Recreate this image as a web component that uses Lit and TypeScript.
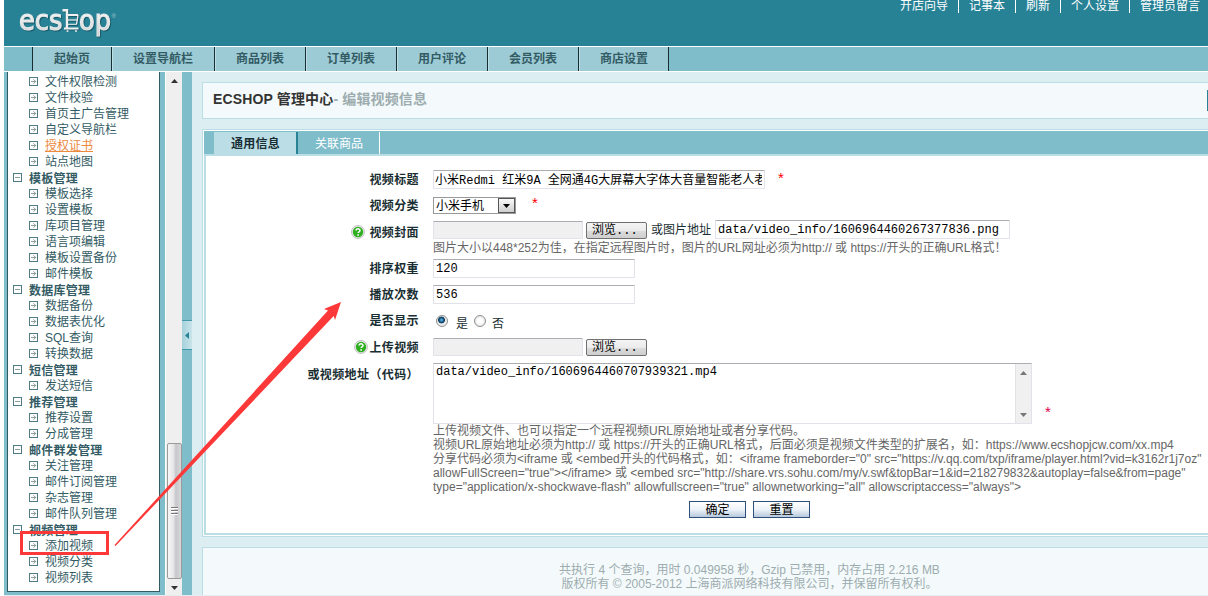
import { LitElement, css, html, svg, nothing } from "lit";

interface MenuGroup {
  title?: string;
  items: string[];
  active?: string;
}

const TOP_LINKS = ["开店向导", "记事本", "刷新", "个人设置", "管理员留言"];

const NAV = ["起始页", "设置导航栏", "商品列表", "订单列表", "用户评论", "会员列表", "商店设置"];

const MENU: MenuGroup[] = [
  {
    items: ["文件权限检测", "文件校验", "首页主广告管理", "自定义导航栏", "授权证书", "站点地图"],
    active: "授权证书"
  },
  {
    title: "模板管理",
    items: ["模板选择", "设置模板", "库项目管理", "语言项编辑", "模板设置备份", "邮件模板"]
  },
  { title: "数据库管理", items: ["数据备份", "数据表优化", "SQL查询", "转换数据"] },
  { title: "短信管理", items: ["发送短信"] },
  { title: "推荐管理", items: ["推荐设置", "分成管理"] },
  { title: "邮件群发管理", items: ["关注管理", "邮件订阅管理", "杂志管理", "邮件队列管理"] },
  { title: "视频管理", items: ["添加视频", "视频分类", "视频列表"] }
];

const UPLOAD_NOTES = [
  "上传视频文件、也可以指定一个远程视频URL原始地址或者分享代码。",
  "视频URL原始地址必须为http:// 或 https://开头的正确URL格式，后面必须是视频文件类型的扩展名，如：https://www.ecshopjcw.com/xx.mp4",
  '分享代码必须为<iframe 或 <embed开头的代码格式，如：<iframe frameborder="0" src="https://v.qq.com/txp/iframe/player.html?vid=k3162r1j7oz"',
  'allowFullScreen="true"></iframe> 或 <embed src="http://share.vrs.sohu.com/my/v.swf&topBar=1&id=218279832&autoplay=false&from=page"',
  'type="application/x-shockwave-flash" allowfullscreen="true" allownetworking="all" allowscriptaccess="always">'
];

const box = svg`<rect x="0.5" y="0.5" width="8" height="8" fill="#fff" stroke="#4f7b84" />`;

const minusIcon = html`<svg class="ico" width="9" height="9">${box}<path d="M2 4.5h5" stroke="#8a9a9e" /></svg>`;

const itemIcon = html`
  <svg class="ico" width="9" height="9">
    ${box}
    <path d="M2 4.5h5M4.5 2.3l2.2 2.2l-2.2 2.2" fill="none" stroke="#8a9a9e" />
  </svg>
`;

const helpIcon = html`
  <svg class="help" width="14" height="14">
    <circle cx="7" cy="7" r="6.4" fill="#f1f1f1" stroke="#b4b4b4" stroke-width="0.9" />
    <circle cx="7" cy="7" r="5.2" fill="#2fae20" />
    <path d="M5.1 5.6c0-2.3 3.9-2.3 3.9-.1c0 1.4-1.9 1.2-1.9 2.6" fill="none" stroke="#fff" stroke-width="1.5" />
    <rect x="6.3" y="9.2" width="1.6" height="1.5" fill="#fff" />
  </svg>
`;

const upArrow = html`<svg width="7" height="4"><path d="M0 4l3.5-4l3.5 4z" fill="currentColor" /></svg>`;
const downArrow = html`<svg width="7" height="4"><path d="M0 0h7l-3.5 4z" fill="currentColor" /></svg>`;

class AppRoot extends LitElement {
  static get styles() {
    return css`
      :host {
        display: block;
        position: relative;
        width: 1208px;
        height: 596px;
        overflow: hidden;
        background: #fff;
        color: #192e32;
        font: 12px/16px "Liberation Sans", "Noto Sans CJK SC", sans-serif;
      }
      * {
        box-sizing: border-box;
      }
      svg {
        display: block;
        flex: none;
      }
      .page {
        display: flex;
        flex-direction: column;
        height: 596px;
        padding-left: 4px;
      }
      .header {
        display: flex;
        justify-content: space-between;
        height: 46px;
        flex: none;
        background: #278296;
      }
      .links {
        display: flex;
        height: 13px;
        color: #fff;
        line-height: 13px;
      }
      .links a {
        padding: 0 10px;
        border-left: 1px solid #fff;
      }
      .links a:first-child {
        border-left: 0;
      }
      .links a:last-child {
        padding-right: 8px;
      }
      .nav {
        display: flex;
        height: 26px;
        flex: none;
        padding-left: 28px;
        background: #80bdcb;
        border-top: 1px solid #fff;
        border-bottom: 1px solid #fff;
        color: #335b64;
        font-weight: bold;
        line-height: 25px;
      }
      .nav a {
        height: 24px;
        padding: 0 21px 0 20px;
        background: #9ccbd6;
        border-left: 1px solid #bbdde5;
        border-right: 1px solid #192e32;
      }
      .nav a:first-child {
        padding-left: 21px;
        border-left-color: #192e32;
      }
      .nav a:last-child {
        padding-right: 20px;
      }
      .main {
        display: flex;
        height: 523px;
        flex: none;
      }
      .side {
        width: 161px;
        padding: 0 5px 3px 3px;
        background: #80bdcb;
      }
      .menu {
        height: 520px;
        padding: 1px 0 0 5px;
        background: #fff;
        border: 1px solid #335b64;
        border-top: 0;
        color: #335b64;
      }
      .row {
        display: flex;
        align-items: center;
        height: 16px;
        line-height: 16px;
        white-space: nowrap;
      }
      .row span {
        padding-top: 2px;
      }
      .row.group {
        gap: 7px;
        font-weight: bold;
        letter-spacing: 0.25px;
      }
      .row.group span {
        padding-top: 3px;
      }
      .row.item {
        gap: 7px;
        padding-left: 16px;
      }
      .current {
        color: #eb8a3d;
        text-decoration: underline;
      }
      .track {
        display: flex;
        flex-direction: column;
        align-items: center;
        justify-content: space-between;
        width: 17px;
        padding: 7px 0 5px;
        background: #efefef;
        border-left: 1px solid #fff;
        color: #333;
      }
      .thumb {
        display: flex;
        flex-direction: column;
        align-items: center;
        justify-content: center;
        gap: 1px;
        width: 15px;
        height: 136px;
        margin-top: 353px;
        margin-bottom: 1px;
        border: 1px solid #9a9a9a;
        border-radius: 2px;
        background: linear-gradient(90deg, #f7f7f7, #e4e4e6 45%, #c6c7cb 60%, #d8d8da);
      }
      .thumb i {
        width: 7px;
        height: 2px;
        background: #777;
        border-bottom: 1px solid #fff;
      }
      .drag {
        display: flex;
        align-items: center;
        width: 10px;
        padding-top: 3px;
        background: #80bdcb;
      }
      .toggle {
        display: flex;
        align-items: center;
        justify-content: center;
        width: 10px;
        height: 30px;
        background: linear-gradient(90deg, #a5d1db, #c9e4ea);
        border-top: 1px solid #4199ab;
        border-bottom: 1px solid #4199ab;
      }
      .content {
        display: flex;
        flex-direction: column;
        flex: 1;
        gap: 10px;
        padding: 10px 0 0 10px;
        background: #ddeef2;
      }
      .title {
        display: flex;
        align-items: center;
        justify-content: space-between;
        height: 37px;
        padding-left: 10px;
        background: #f4fafb;
        border: 1px solid #bbdde5;
        border-right: 0;
        font-size: 14px;
        font-weight: bold;
        letter-spacing: 0.15px;
        color: #333;
      }
      .title div {
        padding-bottom: 3px;
      }
      .title span {
        color: #9cacaf;
      }
      .title i {
        width: 1px;
        height: 21px;
        background: #278296;
      }
      .panel {
        height: 408px;
        padding: 1px 0 1px 1px;
        background: #fff;
        border: 1px solid #bbdde5;
        border-right: 0;
      }
      .tabs {
        display: flex;
        height: 23px;
        padding: 1px 0 0 10px;
        background: #80bdcb;
        line-height: 24px;
      }
      .tabs a {
        height: 22px;
        padding: 0 16px 0 17px;
        border-right: 1px solid #fff;
        color: #fff;
      }
      .tabs a.on {
        background: #bbdde5;
        border-right: 2px solid #278296;
        color: #192e32;
        font-weight: bold;
        letter-spacing: 0.25px;
      }
      .form {
        height: 381px;
        padding-top: 10px;
        border: 2px solid #bbdde5;
        border-right: 0;
      }
      .field {
        display: flex;
        align-items: flex-start;
        height: 26px;
        padding-top: 4px;
      }
      .field.cover {
        height: 37px;
        padding-top: 2px;
      }
      .field.show {
        height: 27px;
      }
      .field.code {
        height: auto;
        padding-top: 3px;
      }
      .label {
        display: flex;
        justify-content: flex-end;
        align-items: center;
        gap: 4px;
        width: 213px;
        height: 18px;
        flex: none;
        margin-right: 14px;
        padding-top: 2px;
        font-weight: bold;
        letter-spacing: 0.4px;
      }
      .help {
        margin-bottom: 2px;
      }
      .cover .label {
        margin-top: 3px;
      }
      .upload .label {
        gap: 1px;
      }
      .code .label {
        margin-top: 2px;
      }
      .line {
        display: flex;
        align-items: flex-start;
        white-space: nowrap;
      }
      .input,
      .file,
      .code-box {
        height: 19px;
        margin: 0;
        padding: 0 2px;
        background: #fff;
        border: 1px solid #e2e3ea;
        border-top-color: #abadb3;
        border-radius: 1px;
        outline: 0;
        color: #000;
        font: 12px/16px "Liberation Mono", "Noto Sans CJK SC", monospace;
      }
      .w-title {
        width: 332px;
        padding: 0 2px 2px 1px;
      }
      .w-url {
        width: 295px;
        margin-left: 4px;
      }
      .w-num {
        width: 202px;
      }
      .file {
        width: 150px;
        height: 18px;
        background: #f0f0f0;
      }
      .cover .file {
        margin-top: 1px;
      }
      .browse {
        width: 61px;
        height: 17px;
        margin: 1px 0 0 3px;
        padding-left: 5px;
        background: linear-gradient(#f4f4f4, #ebebeb 50%, #dcdcdc 51%, #cfcfcf);
        border: 1px solid #707070;
        border-radius: 2px;
        color: #000;
        font: 12px/17px "Liberation Mono", "Noto Sans CJK SC", monospace;
      }
      .cover .browse {
        margin-top: 2px;
      }
      .or {
        margin-left: 4px;
        line-height: 20px;
      }
      .select {
        display: flex;
        width: 83px;
        height: 17px;
        margin-top: 1px;
        padding: 0 0 0 2px;
        justify-content: space-between;
        align-items: center;
        border: 1px solid #9a9a9a;
        color: #000;
        line-height: 17px;
      }
      .select span {
        padding-top: 2px;
      }
      .select i {
        display: flex;
        align-items: center;
        justify-content: center;
        width: 17px;
        height: 15px;
        border: 1px solid #555;
        background: linear-gradient(#f8f8f8, #cfcfcf);
      }
      .star {
        margin-left: 13px;
        color: #f00;
        font-size: 15px;
        line-height: 16px;
      }
      .select + .star {
        margin-left: 16px;
        line-height: 14px;
      }
      .code-line .star {
        align-self: flex-end;
        color: #e0004a;
        margin-bottom: 4px;
      }
      .note {
        color: #666;
        line-height: 14px;
        white-space: nowrap;
      }
      .cover .note {
        padding-top: 1px;
      }
      .radio {
        width: 12px;
        height: 12px;
        margin: 4px 8px 0 3px;
        border: 1px solid #8e8f8f;
        border-radius: 50%;
        background: radial-gradient(#fff 30%, #d5d8da);
      }
      .radio.on {
        background: radial-gradient(circle at 45% 40%, #6cc2ee 0, #1b5c8c 25%, #133a5a 38%, #e6e9ea 46%, #f4f4f4);
      }
      .radio:not(.on) {
        margin-right: 6px;
      }
      .opt {
        width: 15px;
        line-height: 26px;
      }
      .code-box {
        display: flex;
        justify-content: space-between;
        width: 599px;
        height: 61px;
        padding-right: 0;
      }
      .bar {
        display: flex;
        flex-direction: column;
        justify-content: space-between;
        align-items: center;
        width: 16px;
        padding: 7px 0 6px;
        background: #f0f0f0;
        border-left: 1px solid #e3e3e3;
        color: #777;
      }
      .buttons {
        display: flex;
        gap: 7px;
        padding: 7px 0 0 483px;
      }
      .btn {
        width: 57px;
        height: 17px;
        background: linear-gradient(#fff, #edf3f8 50%, #b8c9dc);
        border: 1px solid #2c4f7c;
        color: #000;
        line-height: 17px;
        text-align: center;
      }
      .footer {
        flex: 1;
        padding: 15px 0 0 88px;
        background: #f4fafb;
        border: 1px solid #bbdde5;
        border-width: 1px 0 0 1px;
        color: #9cacaf;
        line-height: 14px;
        text-align: center;
        white-space: nowrap;
      }
      .bottom {
        height: 1px;
        background: #e8ecee;
      }
      .marks {
        position: absolute;
        left: 0;
        top: 0;
        pointer-events: none;
      }
      .wordmark {
        filter: drop-shadow(1px 1px 0.5px #1a5a69);
      }
    `;
  }

  private _renderLogo() {
    return html`
      <svg width="120" height="44">
        <defs>
          <linearGradient id="metal" x1="0" y1="0" x2="0" y2="1">
            <stop offset="0.2" stop-color="#fff" />
            <stop offset="1" stop-color="#c3c8ca" />
          </linearGradient>
        </defs>
        <g
          class="wordmark"
          fill="url(#metal)"
          font-family="DejaVu Sans"
          font-size="28"
          stroke="#e4e6e7"
          stroke-width="1.2"
        >
          <text x="15" y="30" textLength="43.5" lengthAdjust="spacingAndGlyphs">ecs</text>
          <text x="75" y="30" textLength="32" lengthAdjust="spacingAndGlyphs">op</text>
        </g>
        <g class="wordmark" fill="none" stroke="#f0f0f0">
          <path d="M58.5 10.2h4.5v18.3" stroke-width="2.4" />
          <path d="M63 15h11M60 28.5h14.5" stroke-width="2.2" />
          <path d="M64 20h9.5M64 24.3h8.5" stroke="#c9dadd" stroke-width="1.3" />
          <path d="M74 15l-1.5 9.5" stroke-width="1.3" />
        </g>
        <circle cx="63.5" cy="31" r="1.1" fill="#ddd" />
        <circle cx="72" cy="31" r="1.1" fill="#ddd" />
        <text x="107.5" y="17.5" font-size="6" fill="#a8cdd5">®</text>
      </svg>
    `;
  }

  private _renderGroup(group: MenuGroup) {
    return html`
      ${group.title ? html`<div class="row group">${minusIcon}<span>${group.title}</span></div>` : nothing}
      ${group.items.map(
        (item) => html`
          <div class="row item">
            ${itemIcon}<span class=${item === group.active ? "current" : ""}>${item}</span>
          </div>
        `
      )}
    `;
  }

  private _renderForm() {
    return html`
      <div class="form">
        <div class="field">
          <div class="label">视频标题</div>
          <input class="input w-title" value="小米Redmi 红米9A 全网通4G大屏幕大字体大音量智能老人老年手机" />
          <span class="star">*</span>
        </div>
        <div class="field">
          <div class="label">视频分类</div>
          <div class="select"><span>小米手机</span><i>${downArrow}</i></div>
          <span class="star">*</span>
        </div>
        <div class="field cover">
          <div class="label">${helpIcon}<span>视频封面</span></div>
          <div>
            <div class="line">
              <div class="file"></div>
              <div class="browse">浏览...</div>
              <span class="or">或图片地址</span>
              <input class="input w-url" value="data/video_info/1606964460267377836.png" />
            </div>
            <div class="note">
              图片大小以448*252为佳，在指定远程图片时，图片的URL网址必须为http:// 或 https://开头的正确URL格式！
            </div>
          </div>
        </div>
        <div class="field">
          <div class="label">排序权重</div>
          <input class="input w-num" value="120" />
        </div>
        <div class="field">
          <div class="label">播放次数</div>
          <input class="input w-num" value="536" />
        </div>
        <div class="field show">
          <div class="label">是否显示</div>
          <div class="line">
            <span class="radio on"></span><span class="opt">是</span>
            <span class="radio"></span><span class="opt">否</span>
          </div>
        </div>
        <div class="field upload">
          <div class="label">${helpIcon}<span>上传视频</span></div>
          <div class="file"></div>
          <div class="browse">浏览...</div>
        </div>
        <div class="field code">
          <div class="label">或视频地址（代码）</div>
          <div>
            <div class="line code-line">
              <div class="code-box">
                <span>data/video_info/1606964460707939321.mp4</span>
                <div class="bar">${upArrow}${downArrow}</div>
              </div>
              <span class="star">*</span>
            </div>
            ${UPLOAD_NOTES.map((note) => html`<div class="note">${note}</div>`)}
          </div>
        </div>
        <div class="buttons">
          <div class="btn">确定</div>
          <div class="btn">重置</div>
        </div>
      </div>
    `;
  }

  render() {
    return html`
      <div class="page">
        <div class="header">
          ${this._renderLogo()}
          <div class="links">${TOP_LINKS.map((link) => html`<a>${link}</a>`)}</div>
        </div>
        <div class="nav">${NAV.map((tab) => html`<a>${tab}</a>`)}</div>
        <div class="main">
          <div class="side">
            <div class="menu">${MENU.map((group) => this._renderGroup(group))}</div>
          </div>
          <div class="track">
            ${upArrow}
            <div class="thumb"><i></i><i></i><i></i></div>
            ${downArrow}
          </div>
          <div class="drag">
            <div class="toggle">
              <svg width="4" height="7"><path d="M4 0v7l-4-3.5z" fill="#278296" /></svg>
            </div>
          </div>
          <div class="content">
            <div class="title">
              <div>ECSHOP 管理中心<span>- 编辑视频信息</span></div>
              <i></i>
            </div>
            <div class="panel">
              <div class="tabs"><a class="on">通用信息</a><a>关联商品</a></div>
              ${this._renderForm()}
            </div>
            <div class="footer">
              <div>共执行 4 个查询，用时 0.049958 秒，Gzip 已禁用，内存占用 2.216 MB</div>
              <div>版权所有 © 2005-2012 上海商派网络科技有限公司，并保留所有权利。</div>
            </div>
          </div>
        </div>
        <div class="bottom"></div>
      </div>
      <svg class="marks" width="360" height="596">
        <rect x="21.5" y="532.5" width="86" height="21" fill="none" stroke="#fc3838" stroke-width="3" />
        <path d="M114.5 545L328 310.6L324 309L341 302L335 320L333.7 316L115.5 546z" fill="#fc3838" />
      </svg>
    `;
  }
}

customElements.define("app-root", AppRoot);
